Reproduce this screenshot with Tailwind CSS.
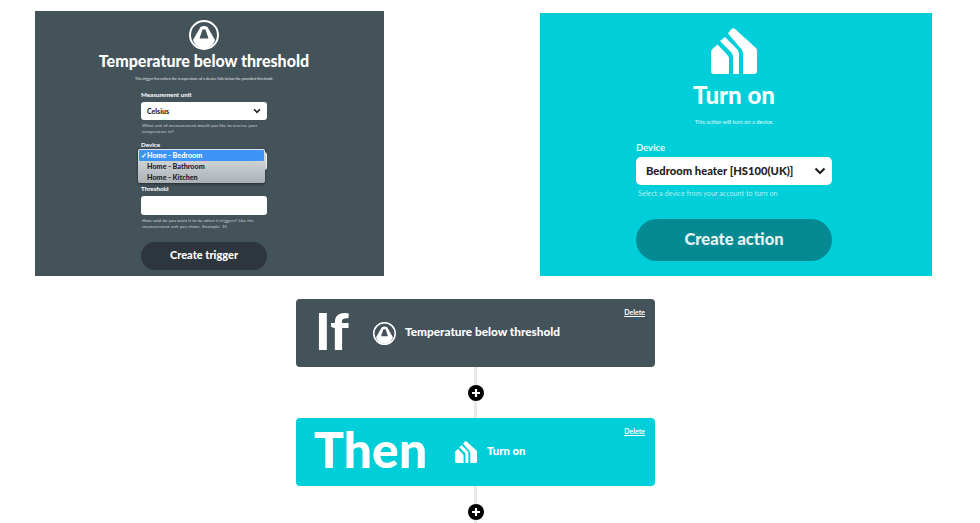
<!DOCTYPE html>
<html lang="en">
  <head>
    <meta charset="UTF-8" />
    <title>If Then applet</title>
    <script src="https://cdn.jsdelivr.net/npm/@tailwindcss/browser@4"></script>
  </head>
  <body class="bg-white font-['Lato','Liberation_Sans',sans-serif] text-white overflow-hidden">
    <div class="w-[980px] h-[523px] flex flex-col overflow-hidden">
      <!-- top row: trigger and action forms -->
      <div class="flex items-end h-[276px] shrink-0">
        <div class="relative ml-[35px] w-[349px] h-[265px] bg-[#44525a] flex flex-col items-center pt-[9px] pr-[11px]">
          <svg class="w-[30px] h-[30px]" viewBox="0 0 30 30">
            <circle cx="15" cy="15" r="14" fill="none" stroke="#fff" stroke-width="2" />
            <path d="M4 20 L11.5 7 Q15 5 18.5 7 L26 20 Q23 28.5 15 28.5 Q7 28.5 4 20 Z" fill="#fff" />
            <path d="M10.5 18.5 L13.5 9.5 H16.5 L19.5 18.5 Z" fill="#44525a" />
          </svg>
          <h1 class="h-[22px] text-[16px] leading-[22px] font-black whitespace-nowrap">Temperature below threshold</h1>
          <p class="mt-[3px] h-[8px] text-[3.7px] leading-[8px] text-white/80">This trigger fires when the temperature of a device falls below the provided threshold.</p>
          <div class="w-[126px] flex flex-col">
            <label class="mt-[7px] h-[10px] text-[6.2px] leading-[10px] font-bold">Measurement unit</label>
            <div class="mt-[2px] h-[18px] bg-white rounded-[3px] flex items-center justify-between pl-[6px] pr-[6px] text-[7px] font-black text-[#222]">
              <span>Celsius</span>
              <svg class="w-[8px] h-[6px]" viewBox="0 0 8 6"><path d="M1 1.2 L4 4.4 L7 1.2" fill="none" stroke="#222" stroke-width="1.6" /></svg>
            </div>
            <p class="mt-[2px] h-[12px] text-[4.6px] leading-[6px] text-white/70 px-[1px]">What unit of measurement would you like to receive your temperature in?</p>
            <label class="mt-[6px] h-[10px] text-[6.2px] leading-[10px] font-bold">Device</label>
            <div class="mt-[2px] h-[18px] bg-white rounded-[3px]"></div>
            <label class="mt-[14px] h-[10px] text-[6.2px] leading-[10px] font-bold">Threshold</label>
            <div class="mt-[2px] h-[19px] bg-white rounded-[3px]"></div>
            <p class="mt-[2px] h-[12px] text-[4.6px] leading-[6px] text-white/70 px-[1px]">How cold do you want it to be when it triggers? Use the measurement unit you chose. Example: 15</p>
            <button class="mt-[13px] h-[28px] pb-[1px] rounded-full bg-[#2d363d] text-[11px] font-black">Create trigger</button>
          </div>
          <!-- open native select menu -->
          <div class="absolute left-[103px] top-[138px] w-[127px] h-[34px] rounded-[2px] bg-gradient-to-b from-[#e3e6e8] to-[#aab0b5] shadow-[0_1px_3px_rgba(0,0,0,0.5)] p-[1px] text-[7.2px] font-black text-[#1c2328] leading-[12px]">
            <div class="h-[11px] bg-[#3d94f6] text-white rounded-[1px] pl-[2px] whitespace-nowrap"><span class="inline-block w-[6px]">✓</span>Home - Bedroom</div>
            <div class="h-[10.5px] pl-[8px]">Home - Bathroom</div>
            <div class="h-[10.5px] pl-[8px]">Home - Kitchen</div>
          </div>
        </div>
        <div class="ml-[156px] w-[392px] h-[263px] bg-[#00ced9] flex flex-col items-center pt-[15px] pr-[4px]">
          <svg class="w-[46px] h-[46px]" viewBox="0 0 46 46">
            <path d="M6.5 16.5 L16 26.5 Q18 28.5 18 31 V46 H3 Q0 46 0 43 V24 Q0 22 2 20.5 Z" fill="#fff" />
            <path d="M9 13 L14 9 L26 21 Q28 23 28 26 V46 H22 V29 Q22 26 20 24 Z" fill="#fff" />
            <path d="M17 5.5 L20 1.5 Q22 -0.5 24 1 L45 20 Q46 21 46 24 V43 Q46 46 43 46 H32 V26 Q32 22 29 19.5 Z" fill="#fff" />
          </svg>
          <h2 class="mt-[7px] h-[28px] text-[24px] leading-[28px] font-black">Turn on</h2>
          <p class="mt-[9px] h-[8px] text-[5.6px] leading-[8px] text-white/85">This action will turn on a device.</p>
          <div class="w-[196px] flex flex-col">
            <label class="mt-[16px] h-[12px] text-[9.5px] leading-[12px] font-bold text-white/90">Device</label>
            <div class="mt-[3px] h-[28px] bg-white rounded-[5px] flex items-center justify-between pl-[10px] pr-[6px] text-[11.2px] font-black text-[#222]">
              <span>Bedroom heater [HS100(UK)]</span>
              <svg class="w-[12px] h-[8px]" viewBox="0 0 12 8"><path d="M1.5 1.5 L6 6 L10.5 1.5" fill="none" stroke="#222" stroke-width="2.2" /></svg>
            </div>
            <p class="mt-[5px] h-[8px] text-[7.2px] leading-[8px] text-white/70 px-[2px]">Select a device from your account to turn on</p>
            <button class="mt-[21px] h-[42px] pb-[2px] rounded-full bg-[#048a92] text-[16.5px] font-black text-white/90">Create action</button>
          </div>
        </div>
      </div>

      <!-- applet steps -->
      <div class="w-[359px] ml-[296px] mt-[23px] flex flex-col items-center">
        <div class="relative w-full h-[68px] bg-[#44525a] rounded-[4px] flex items-center">
          <span class="ml-[19px] w-[58px] pb-[7px] text-[52px] leading-none font-black">If</span>
          <svg class="w-[23px] h-[23px]" viewBox="0 0 30 30">
            <circle cx="15" cy="15" r="14" fill="none" stroke="#fff" stroke-width="2" />
            <path d="M4 20 L11.5 7 Q15 5 18.5 7 L26 20 Q23 28.5 15 28.5 Q7 28.5 4 20 Z" fill="#fff" />
            <path d="M10.5 18.5 L13.5 9.5 H16.5 L19.5 18.5 Z" fill="#44525a" />
          </svg>
          <span class="ml-[9px] mb-[2px] text-[11.8px] font-black">Temperature below threshold</span>
          <a class="absolute right-[10px] top-[8px] text-[7px] font-bold underline">Delete</a>
        </div>
        <div class="w-[3px] h-[51px] bg-[#e8e8e8] flex items-center justify-center">
          <div class="shrink-0 w-[16px] h-[16px] rounded-full bg-black flex items-center justify-center">
            <svg class="w-[10px] h-[10px]" viewBox="0 0 10 10"><path d="M5 1 V9 M1 5 H9" stroke="#fff" stroke-width="2.2" /></svg>
          </div>
        </div>
        <div class="relative w-full h-[68px] bg-[#00ced9] rounded-[4px] flex items-center">
          <span class="ml-[18px] w-[141px] pb-[6px] text-[50px] leading-none font-black">Then</span>
          <svg class="w-[22px] h-[22px]" viewBox="0 0 46 46">
            <path d="M6.5 16.5 L16 26.5 Q18 28.5 18 31 V46 H3 Q0 46 0 43 V24 Q0 22 2 20.5 Z" fill="#fff" />
            <path d="M9 13 L14 9 L26 21 Q28 23 28 26 V46 H22 V29 Q22 26 20 24 Z" fill="#fff" />
            <path d="M17 5.5 L20 1.5 Q22 -0.5 24 1 L45 20 Q46 21 46 24 V43 Q46 46 43 46 H32 V26 Q32 22 29 19.5 Z" fill="#fff" />
          </svg>
          <span class="ml-[10px] mb-[2px] text-[11.3px] font-black">Turn on</span>
          <a class="absolute right-[10px] top-[8px] text-[7px] font-bold underline">Delete</a>
        </div>
        <div class="w-[3px] h-[37px] bg-[#e8e8e8] flex flex-col items-center pt-[18px]">
          <div class="shrink-0 w-[16px] h-[16px] rounded-full bg-black flex items-center justify-center">
            <svg class="w-[10px] h-[10px]" viewBox="0 0 10 10"><path d="M5 1 V9 M1 5 H9" stroke="#fff" stroke-width="2.2" /></svg>
          </div>
        </div>
      </div>
    </div>
  </body>
</html>
